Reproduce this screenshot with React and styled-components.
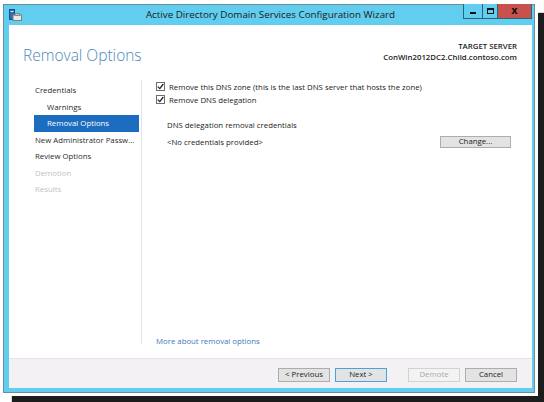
import React from "react";
import styled, { createGlobalStyle } from "styled-components";

const Global = createGlobalStyle`
  html, body { margin: 0; padding: 0; background: #ffffff; }
  body { font-family: "Open Sans", "Noto Sans", "DejaVu Sans", sans-serif; }
  * { box-sizing: border-box; }
`;

const Page = styled.div`
  width: 544px;
  height: 402px;
  overflow: hidden;
  padding: 4px 0 0 3px;
`;

const Window = styled.div`
  width: 532px;
  height: 389px;
  display: flex;
  flex-direction: column;
  background: #61cdef;
  border: 1px solid #6d8d9c;
  padding: 0 2px 4px 5px;
  box-shadow: 3px 3px 0 #ffffff, 9px 9px 1px #1c1c1c;
`;

const TitleBar = styled.div`
  height: 20px;
  flex: none;
  display: grid;
  grid-template-columns: 1fr auto 1fr;
  align-items: start;
`;

const TitleIcon = styled.svg`
  margin-top: 4px;
  width: 13px;
  height: 12px;
`;

const TitleText = styled.div`
  font-size: 9.8px;
  line-height: 20px;
  color: #1b1b1b;
  white-space: nowrap;
`;

const Controls = styled.div`
  justify-self: end;
  display: flex;
  margin-top: -1px;
`;

const Ctrl = styled.div`
  width: ${(p) => p.$w}px;
  height: 15px;
  border: 1px solid #2e6378;
  border-top: none;
  margin-left: -1px;
  background: ${(p) => (p.$close ? "#c9514d" : "#61cdef")};
  display: flex;
  align-items: center;
  justify-content: center;
`;

const MinGlyph = styled.div`
  width: 6px;
  height: 2px;
  background: #111;
  margin-top: 4px;
`;

const MaxGlyph = styled.div`
  width: 7px;
  height: 6px;
  border: 1px solid #111;
  border-top-width: 2px;
`;

const CloseGlyph = styled.span`
  font-family: "DejaVu Sans", sans-serif;
  font-weight: bold;
  font-size: 10px;
  line-height: 10px;
  color: #111;
`;

const Client = styled.div`
  flex: 1;
  background: #ffffff;
  display: flex;
  flex-direction: column;
  min-height: 0;
`;

const Header = styled.div`
  height: 55px;
  flex: none;
  display: flex;
  justify-content: space-between;
  padding: 14px 15px 0 14px;
`;

const PageTitle = styled.h1`
  margin: 5px 0 0;
  font-weight: 300;
  font-size: 15.5px;
  line-height: 22px;
  color: #4e87b4;
`;

const Target = styled.div`
  text-align: right;
  padding-top: 2px;
  font-size: 7.8px;
  line-height: 11px;
  color: #222;
  font-weight: 600;
`;

const Main = styled.div`
  flex: 1;
  display: flex;
  min-height: 0;
  padding-bottom: 14px;
`;

const Nav = styled.div`
  width: 133px;
  flex: none;
  padding: 2px 2px 0 25px;
  border-right: 1px solid #e3e3e3;
`;

const NavItem = styled.div`
  height: 16.5px;
  line-height: 16.5px;
  font-size: 7.8px;
  white-space: nowrap;
  overflow: hidden;
  padding-left: ${(p) => (p.$sub ? 13 : 1)}px;
  color: ${(p) => (p.$active ? "#ffffff" : p.$disabled ? "#c2c2c2" : "#2b2b2b")};
  background: ${(p) => (p.$active ? "#1c6dbf" : "transparent")};
`;

const Content = styled.div`
  flex: 1;
  display: flex;
  flex-direction: column;
  padding: 0 21px 0 14px;
`;

const CheckRow = styled.label`
  display: flex;
  align-items: center;
  gap: 4px;
  height: 13px;
  font-size: 7.8px;
  color: #222;
  white-space: nowrap;
`;

const Box = styled.span`
  width: 9px;
  height: 9px;
  border: 1px solid #6e6e6e;
  background: #fff;
  display: flex;
  align-items: center;
  justify-content: center;
`;

const Section = styled.div`
  padding-left: 11px;
  margin-top: 13px;
`;

const Label = styled.div`
  font-size: 7.8px;
  line-height: 12px;
  color: #222;
`;

const CredRow = styled.div`
  display: flex;
  justify-content: space-between;
  align-items: center;
  margin-top: 5px;
`;

const Spacer = styled.div`
  flex: 1;
`;

const Link = styled.a`
  font-size: 7.8px;
  line-height: 12px;
  margin-bottom: -3px;
  color: #3a78c2;
  text-decoration: none;
`;

const Footer = styled.div`
  height: 30px;
  flex: none;
  border-top: 1px solid #e6e3e6;
  background: #f4f1f5;
  display: flex;
  justify-content: flex-end;
  align-items: center;
  padding: 2px 15px 0 0;
`;

const Button = styled.button`
  width: ${(p) => p.$w || 52}px;
  height: ${(p) => p.$h || 14}px;
  margin-left: ${(p) => p.$gap || 0}px;
  padding: 0;
  font-family: inherit;
  font-size: 7.8px;
  line-height: 1;
  color: ${(p) => (p.disabled ? "#a8a8a8" : "#222")};
  background: ${(p) => (p.disabled ? "#f3f3f3" : "#e3e3e3")};
  border: 1px solid ${(p) => (p.$default ? "#4aa3df" : p.disabled ? "#d2d2d2" : "#adadad")};
`;

const Check = () => (
  <svg width="7" height="7" viewBox="0 0 7 7">
    <path d="M0.8 3.6 L2.8 5.6 L6.3 1" fill="none" stroke="#222" strokeWidth="1.3" />
  </svg>
);

export default function App() {
  return (
    <>
      <Global />
      <Page>
        <Window>
          <TitleBar>
            <TitleIcon viewBox="0 0 13 12">
              <rect x="0.5" y="0.5" width="5" height="10" fill="#2f6fb5" stroke="#1c4c85" />
              <rect x="1.5" y="2" width="3" height="1" fill="#cfe6fb" />
              <rect x="4" y="6" width="8.5" height="5.5" fill="#e9e9e9" stroke="#7d7d7d" />
              <rect x="6" y="4.5" width="4.5" height="2" fill="#c9c9c9" stroke="#7d7d7d" strokeWidth="0.8" />
            </TitleIcon>
            <TitleText>Active Directory Domain Services Configuration Wizard</TitleText>
            <Controls>
              <Ctrl $w={20}><MinGlyph /></Ctrl>
              <Ctrl $w={16}><MaxGlyph /></Ctrl>
              <Ctrl $w={35} $close><CloseGlyph>x</CloseGlyph></Ctrl>
            </Controls>
          </TitleBar>
          <Client>
            <Header>
              <PageTitle>Removal Options</PageTitle>
              <Target>
                <div>TARGET SERVER</div>
                <div>ConWin2012DC2.Child.contoso.com</div>
              </Target>
            </Header>
            <Main>
              <Nav>
                <NavItem>Credentials</NavItem>
                <NavItem $sub>Warnings</NavItem>
                <NavItem $sub $active>Removal Options</NavItem>
                <NavItem>New Administrator Passw...</NavItem>
                <NavItem>Review Options</NavItem>
                <NavItem $disabled>Demotion</NavItem>
                <NavItem $disabled>Results</NavItem>
              </Nav>
              <Content>
                <CheckRow>
                  <Box><Check /></Box>
                  Remove this DNS zone (this is the last DNS server that hosts the zone)
                </CheckRow>
                <CheckRow>
                  <Box><Check /></Box>
                  Remove DNS delegation
                </CheckRow>
                <Section>
                  <Label>DNS delegation removal credentials</Label>
                  <CredRow>
                    <Label>&lt;No credentials provided&gt;</Label>
                    <Button $w={71} $h={12}>Change...</Button>
                  </CredRow>
                </Section>
                <Spacer />
                <Link href="#">More about removal options</Link>
              </Content>
            </Main>
            <Footer>
              <Button>&lt; Previous</Button>
              <Button $gap={5} $default>Next &gt;</Button>
              <Button $gap={21} disabled>Demote</Button>
              <Button $gap={5}>Cancel</Button>
            </Footer>
          </Client>
        </Window>
      </Page>
    </>
  );
}
